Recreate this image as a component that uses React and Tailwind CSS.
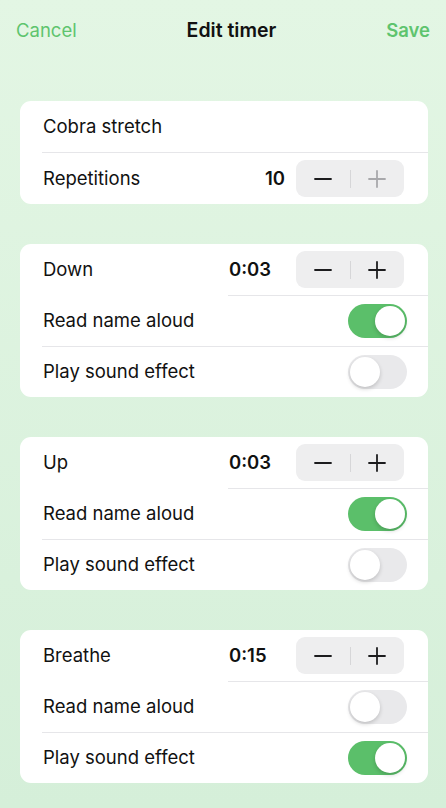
import { useState } from 'react'

const font = { fontFamily: 'Inter, "Noto Sans", sans-serif' }

function Stepper({ plusDisabled }) {
  return (
    <div className="flex h-[37px] w-[108px] items-center rounded-[9px] bg-[#eeeeef]">
      <div className="flex flex-1 items-center justify-center">
        <svg width="20" height="20" viewBox="0 0 20 20">
          <path d="M2 10h16" stroke="#1c1c1e" strokeWidth="1.8" strokeLinecap="round" />
        </svg>
      </div>
      <div className="h-[18px] w-px bg-[#d6d6d8]" />
      <div className="flex flex-1 items-center justify-center">
        <svg width="20" height="20" viewBox="0 0 20 20">
          <path
            d="M2 10h16M10 2v16"
            stroke={plusDisabled ? '#a8a8ab' : '#1c1c1e'}
            strokeWidth="1.8"
            strokeLinecap="round"
          />
        </svg>
      </div>
    </div>
  )
}

function Toggle({ on, onChange }) {
  return (
    <button
      onClick={onChange}
      className={
        'relative h-[34px] w-[59px] rounded-full transition-colors ' +
        (on ? 'bg-[#5bbf6a]' : 'bg-[#e9e9eb]')
      }
    >
      <span
        className={
          'absolute top-[2px] h-[30px] w-[30px] rounded-full bg-white shadow-[0_2px_4px_rgba(0,0,0,0.18)] transition-all ' +
          (on ? 'left-[27px]' : 'left-[2px]')
        }
      />
    </button>
  )
}

function TimerCard({ name, time, readAloud, playSound }) {
  const [read, setRead] = useState(readAloud)
  const [sound, setSound] = useState(playSound)
  return (
    <div className="overflow-hidden rounded-[11px] bg-white">
      <div className="flex h-[51px] items-center pl-[23px] pr-[24px]">
        <span className="flex-1">{name}</span>
        <span className="w-[67px] font-semibold">{time}</span>
        <Stepper />
      </div>
      <div className="ml-[208px] h-px bg-[#e6e6e9]" />
      <div className="flex h-[50px] items-center pl-[23px] pr-[21px]">
        <span className="flex-1">Read name aloud</span>
        <Toggle on={read} onChange={() => setRead(!read)} />
      </div>
      <div className="ml-[22px] h-px bg-[#e6e6e9]" />
      <div className="flex h-[50px] items-center pl-[23px] pr-[21px]">
        <span className="flex-1">Play sound effect</span>
        <Toggle on={sound} onChange={() => setSound(!sound)} />
      </div>
    </div>
  )
}

export default function App() {
  return (
    <div
      style={font}
      className="min-h-[808px] bg-gradient-to-b from-[#e3f6e4] to-[#d5efd9] text-[18.5px] text-[#111111]"
    >
      <div className="flex h-[60px] items-center justify-between px-[16px] pt-[1px]">
        <button className="text-[#5ec46e]">Cancel</button>
        <span className="text-[19.5px] font-semibold">Edit timer</span>
        <button className="font-semibold text-[#5ec46e]">Save</button>
      </div>

      <div className="mt-[41px] flex flex-col gap-[40px] pl-[20px] pr-[18px]">
        <div className="overflow-hidden rounded-[11px] bg-white">
          <div className="flex h-[51px] items-center pl-[23px]">
            <span>Cobra stretch</span>
          </div>
          <div className="ml-[22px] h-px bg-[#e6e6e9]" />
          <div className="flex h-[51px] items-center pl-[23px] pr-[24px]">
            <span className="flex-1">Repetitions</span>
            <span className="mr-[11px] font-semibold">10</span>
            <Stepper plusDisabled />
          </div>
        </div>

        <TimerCard name="Down" time="0:03" readAloud={true} playSound={false} />
        <TimerCard name="Up" time="0:03" readAloud={true} playSound={false} />
        <TimerCard name="Breathe" time="0:15" readAloud={false} playSound={true} />
      </div>
    </div>
  )
}
